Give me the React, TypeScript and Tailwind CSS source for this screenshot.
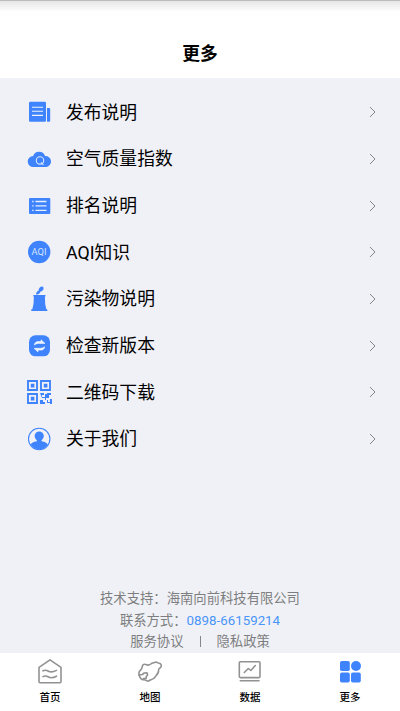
import React from 'react'

interface MenuItem {
  label: string
  icon: React.ReactNode
}

interface TabItem {
  label: string
  icon: React.ReactNode
}

// Every menu icon is drawn on the same 26x26 grid
const MenuIcon: React.FC<{ children: React.ReactNode }> = ({ children }) => (
  <svg viewBox="0 0 26 26" className="h-[26px] w-[26px] shrink-0 text-[#3f84fd]" fill="currentColor">
    {children}
  </svg>
)

const TabIcon: React.FC<{ children: React.ReactNode }> = ({ children }) => (
  <svg
    viewBox="0 0 28 28"
    className="h-7 w-7"
    fill="none"
    stroke="#929292"
    strokeWidth="1.6"
    strokeLinecap="round"
    strokeLinejoin="round"
  >
    {children}
  </svg>
)

const menuItems: MenuItem[] = [
  {
    label: '发布说明',
    icon: (
      <MenuIcon>
        <rect x="3" y="2.8" width="17" height="20" rx="1.2" />
        <path d="M21 9h2.2a1 1 0 0 1 1 1v11.800a1 1 0 0 1-1 1H21z" />
        <path d="M6 8.2h11M6 12.2h11M6 16.4h11" stroke="#f0f2f7" strokeWidth="1.1" />
      </MenuIcon>
    ),
  },
  {
    label: '空气质量指数',
    icon: (
      <MenuIcon>
        <path d="M7.300 21A5.500 5.500 0 0 1 7.100 10 6.300 6.300 0 0 1 19 9.900 5.600 5.600 0 0 1 20.400 21z" />
        <circle cx="14" cy="14.400" r="3.700" fill="none" stroke="#dce8ff" strokeWidth="1.100" />
        <path d="M15 16.500l2.500 2.400" stroke="#dce8ff" strokeWidth="1.100" />
      </MenuIcon>
    ),
  },
  {
    label: '排名说明',
    icon: (
      <MenuIcon>
        <rect x="3" y="5" width="21.300" height="16" rx="1" />
        <path d="M9.500 8.500h11M9.500 12.900h11M9.500 17.300h11" stroke="#e8f0ff" strokeWidth="1.300" />
        <path d="M6.200 8.500h1.400M6.200 12.900h1.400M6.200 17.300h1.400" stroke="#e8f0ff" strokeWidth="1.300" />
      </MenuIcon>
    ),
  },
  {
    label: 'AQI知识',
    icon: (
      <MenuIcon>
        <circle cx="13.200" cy="13" r="11.200" />
        <text x="13.100" y="16.200" fontSize="9.300" textAnchor="middle" fill="#d6e4ff" className="font-['Roboto']">
          AQI
        </text>
      </MenuIcon>
    ),
  },
  {
    label: '污染物说明',
    icon: (
      <MenuIcon>
        <path d="M7.300 9h12.200v1.500h-.6L19.200 18l1.100 5.300h1V25H5.300v-1.700h1L7.500 18l.4-7.500h-.6z" />
        <path
          d="M10 8.400c.2-2.200 1-3.400 2.500-3.700C12.600 2 14.300.400 16 .400c1.400 0 2 1.600 1.300 3-.6 1.300-1.900 1.900-3 2.300-.2 1.400-1.600 2.100-2.600 2.700z"
        />
      </MenuIcon>
    ),
  },
  {
    label: '检查新版本',
    icon: (
      <MenuIcon>
        <rect x="3" y="2.300" width="21" height="21" rx="6.500" />
        <path
          d="M8.300 12c.4-2.200 1.700-3.400 3.700-3.400h3V6.800l4 3.600h-5.500c-2 0-3.400.3-5.200 1.600zM18.700 13.700c-.4 2.200-1.700 3.400-3.700 3.400h-3v1.800l-4-3.600h5.500c2 0 3.400-.3 5.200-1.600z"
          fill="#f0f5ff"
          stroke="#f0f5ff"
          strokeWidth=".6"
          strokeLinejoin="round"
        />
      </MenuIcon>
    ),
  },
  {
    label: '二维码下载',
    icon: (
      <MenuIcon>
        <path
          d="M2 2h9v9H2zM15 2h9v9h-9zM2 15h9v9H2z"
          fill="none"
          stroke="currentColor"
          strokeWidth="1.900"
        />
        <path d="M4.800 4.800h3.600v3.600H4.800zM17.800 4.800h3.600v3.600h-3.600zM4.800 17.800h3.600v3.600H4.800z" />
        <path d="M14 14h4v2h-2v2h3v-3h2v-1h4v2h-2v3h-3v2h2v2h2v-3h2v5h-2v-1h-3v-3h-2v-2h-3zM14 21h3v2h2v2h-5z" />
      </MenuIcon>
    ),
  },
  {
    label: '关于我们',
    icon: (
      <MenuIcon>
        <circle cx="13.200" cy="13" r="10.700" fill="none" stroke="currentColor" strokeWidth="1.100" />
        <circle cx="13.200" cy="10" r="4.600" />
        <path d="M10.800 13h4.800v2.300c3.500.7 5.400 1.700 6.200 3.300a10.300 10.300 0 0 1-17.200 0c.8-1.600 2.700-2.600 6.200-3.300z" />
      </MenuIcon>
    ),
  },
]

const tabItems: TabItem[] = [
  {
    label: '首页',
    icon: (
      <TabIcon>
        <path d="M3 9.300L14 1.800 25 9.300V23.700a1 1 0 0 1-1 1H4a1 1 0 0 1-1-1z" />
        <path d="M7 12.800c2-1 3.500-.7 5.500.4s5 .7 8-.8M7 18.600c2-1 3.500-.7 5.500.4s5 .7 8-.8" />
      </TabIcon>
    ),
  },
  {
    label: '地图',
    icon: (
      <TabIcon>
        <path d="M6.300 8.500c.2-2 2.200-2.600 3.600-1.900 1.900.8 4.300.2 5.600-1.100 1.300-1 2.700-.5 3.900-1.200 1.300-.7 2.300.8 3.600.9 2.200.2 2.800 2.500 1.900 3.800-.7 1.300-2.500 1.500-2.300 3 .3 2.300-1.200 4.200-2.600 5.800-1.200 1.500-2.100 3.500-4.400 3.700-1.600.2-2.400 1.800-4.300 1.500-1.400-.2-1.700-1.300-3.100-1.200-1.800.1-3.600-.9-4.300-2.600-.9-2-1.500-4.400-.2-6.100 1.100-1.400 2.400-2.300 2.600-4.600z" />
        <path d="M2.800 17l3.500-.5 2-1.500 2.700-.2.600 2.200-1.400 1.700v1.800H7.500" />
      </TabIcon>
    ),
  },
  {
    label: '数据',
    icon: (
      <TabIcon>
        <rect x="3.300" y="3.700" width="20.700" height="15.900" rx="1" />
        <path d="M8.300 14.500l4-4 2.500 2 4.500-5M4.300 22.700h18.700" />
      </TabIcon>
    ),
  },
  {
    label: '更多',
    icon: (
      <svg viewBox="0 0 28 28" className="h-7 w-7" fill="#3f84fd">
        <rect x="4" y="3" width="9.800" height="10" rx="1.800" />
        <circle cx="20" cy="8" r="5" />
        <rect x="4" y="14.600" width="9.800" height="10" rx="1.800" />
        <rect x="15" y="14.600" width="9.800" height="10" rx="1.800" />
      </svg>
    ),
  },
]

const MenuRow: React.FC<{ item: MenuItem }> = ({ item }) => (
  <li className="flex h-[46.670px] items-center pr-[23.500px] pl-[26px]">
    {item.icon}
    <span className="ml-3.5 flex-1 pt-px text-[17.800px] leading-6 text-black">{item.label}</span>
    <svg viewBox="0 0 8 12" className="h-3 w-2" fill="none" stroke="#85868a" strokeWidth="1">
      <path d="M1 1l5 5-5 5" />
    </svg>
  </li>
)

export default function App() {
  return (
    <div className="flex h-[711px] w-[400px] flex-col overflow-hidden bg-[#f0f1f6] font-['Roboto','Noto_Sans_CJK_SC',sans-serif]">
      <header className="flex h-[78px] flex-col bg-white">
        <div className="h-3 border-t border-[#bcbcbc] bg-linear-to-b from-[#e6e6e6] to-white" />
        <h1 className="mt-[30px] text-center text-[17.800px] leading-6 font-bold text-black">更多</h1>
      </header>

      <ul className="mt-[11px] flex-1">
        {menuItems.map((item) => (
          <MenuRow key={item.label} item={item} />
        ))}
      </ul>

      <footer className="flex h-[65px] flex-col items-center text-[13.330px] leading-[21.500px] text-[#7d7e80]">
        <p>技术支持：海南向前科技有限公司</p>
        <p>
          联系方式：<span className="text-[#4a95f8]">0898-66159214</span>
        </p>
        <div className="flex items-center">
          <span>服务协议</span>
          <span className="mx-4 h-[11px] w-px bg-[#858688]" />
          <span>隐私政策</span>
        </div>
      </footer>

      <nav className="grid h-[58px] grid-cols-4 bg-white">
        {tabItems.map((tab) => (
          <div key={tab.label} className="flex flex-col items-center pt-[5px]">
            {tab.icon}
            <span className="mt-1 text-[10.500px] leading-4 font-medium text-black">{tab.label}</span>
          </div>
        ))}
      </nav>
    </div>
  )
}
